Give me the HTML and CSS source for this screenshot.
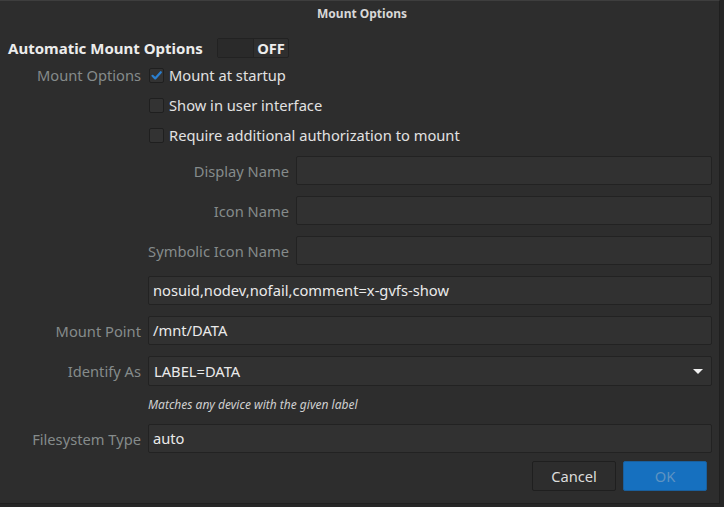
FILE: index.html
```html
<!DOCTYPE html>
<html>
<head>
<meta charset="utf-8">
<link rel="stylesheet" href="styles.css">
</head>
<body>
<div class="dialog">
  <div class="titlebar">Mount Options</div>
  <div class="content">
    <div class="header">
      <span class="header-title">Automatic Mount Options</span>
      <div class="switch"><span class="switch-slider"></span><span class="switch-label">OFF</span></div>
    </div>
    <div class="grid">
      <div class="label top">Mount Options</div>
      <div class="checks">
        <label class="check"><span class="box checked"><svg width="13" height="13" viewBox="0 0 13 13"><path d="M2.5 6.8 L5.2 9.4 L10.8 3.2" fill="none" stroke="#2b7fcf" stroke-width="2.2" stroke-linecap="round" stroke-linejoin="round"/></svg></span>Mount at startup</label>
        <label class="check"><span class="box"></span>Show in user interface</label>
        <label class="check"><span class="box"></span>Require additional authorization to mount</label>
      </div>
      <div></div>
      <div class="subgrid">
        <div class="label">Display Name</div><div class="input"></div>
        <div class="label">Icon Name</div><div class="input"></div>
        <div class="label">Symbolic Icon Name</div><div class="input"></div>
      </div>
      <div></div>
      <div class="input field">nosuid,nodev,nofail,comment=x-gvfs-show</div>
      <div class="label">Mount Point</div>
      <div class="input field">/mnt/DATA</div>
      <div class="label">Identify As</div>
      <div class="input combo"><span>LABEL=DATA</span><span class="arrow"></span></div>
      <div></div>
      <div class="hint">Matches any device with the given label</div>
      <div class="label">Filesystem Type</div>
      <div class="input field">auto</div>
    </div>
    <div class="buttons">
      <div class="btn">Cancel</div>
      <div class="btn primary">OK</div>
    </div>
  </div>
</div>
</body>
</html>
```
FILE: styles.css
```css
html, body {
  margin: 0;
  padding: 0;
  background: #262626;
  width: 724px;
  height: 507px;
  overflow: hidden;
}
body {
  font-family: "Noto Sans", "Open Sans", sans-serif;
  font-size: 14.7px;
  color: #e2e2e2;
}
.dialog {
  width: 719px;
  height: 502px;
  background: #2d2d2d;
  border-top: 1px solid #3e3e3e;
  border-right: 1px solid #1f1f1f;
  border-bottom: 1px solid #1f1f1f;
  box-sizing: content-box;
}
.titlebar {
  height: 25px;
  line-height: 25px;
  text-align: center;
  padding-left: 5px;
  font-size: 12px;
  font-weight: bold;
  color: #d8d8d8;
}
.content {
  padding: 0 8px 0 8px;
}
.header {
  display: flex;
  align-items: center;
  margin-top: 12px;
  height: 20px;
}
.header-title {
  font-weight: bold;
  font-size: 15px;
  color: #ececec;
  width: 209px;
  white-space: nowrap;
}
.switch {
  display: flex;
  width: 72px;
  height: 20px;
  box-sizing: border-box;
  border: 1px solid #222;
  border-radius: 2px;
  background: #2f2f2f;
}
.switch-slider {
  width: 35px;
  background: #2a2a2a;
  border-right: 1px solid #232323;
}
.switch-label {
  flex: 1;
  font-weight: bold;
  font-size: 14.7px;
  line-height: 18px;
  text-align: center;
  color: #ededed;
}
.grid {
  display: grid;
  grid-template-columns: 133px 564px;
  column-gap: 7px;
  row-gap: 11px;
  margin-top: 2px;
  align-items: center;
}
.label {
  text-align: right;
  color: #858b8b;
  white-space: nowrap;
}
.label.top {
  align-self: start;
  line-height: 30px;
}
.checks {
  display: flex;
  flex-direction: column;
}
.check {
  display: flex;
  align-items: center;
  height: 30px;
  white-space: nowrap;
}
.box {
  width: 15px;
  height: 15px;
  box-sizing: border-box;
  border: 1px solid #1f1f1f;
  border-radius: 2px;
  background: #333;
  margin-left: 1px;
  margin-right: 5px;
  display: flex;
  align-items: center;
  justify-content: center;
}
.subgrid {
  display: grid;
  grid-template-columns: 141px 416px;
  column-gap: 7px;
  row-gap: 11px;
  align-items: center;
  margin-top: -5px;
}
.input {
  height: 29px;
  box-sizing: border-box;
  border: 1px solid #222;
  border-radius: 2px;
  background: #313131;
}
.field {
  padding-left: 4px;
  line-height: 27px;
  color: #eaeaea;
}
.combo {
  height: 30px;
  display: flex;
  align-items: center;
  justify-content: space-between;
  padding: 0 8px 0 5px;
  color: #eaeaea;
}
.arrow {
  width: 0;
  height: 0;
  border-left: 5px solid transparent;
  border-right: 5px solid transparent;
  border-top: 5px solid #f0f0f0;
}
.hint {
  font-size: 12px;
  font-style: italic;
  color: #d0d0d0;
  height: 16px;
  line-height: 16px;
  white-space: nowrap;
}
.buttons {
  display: flex;
  justify-content: flex-end;
  gap: 7px;
  margin-top: 8px;
  padding-right: 4px;
}
.btn {
  width: 84px;
  height: 30px;
  box-sizing: border-box;
  border: 1px solid #1f1f1f;
  border-radius: 2px;
  background: #2d2d2d;
  text-align: center;
  line-height: 28px;
  color: #dcdcdc;
}
.primary {
  background: #1670bf;
  border-color: #1a5f9c;
  color: #5e93c2;
}
```
